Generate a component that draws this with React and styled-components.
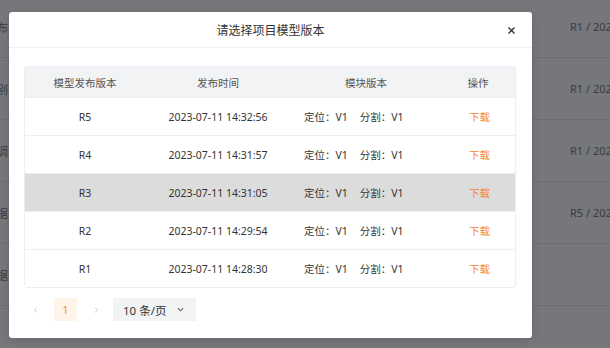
import React from 'react';
import styled, { createGlobalStyle } from 'styled-components';

const GlobalStyle = createGlobalStyle`
  html, body {
    margin: 0;
    padding: 0;
    width: 610px;
    height: 348px;
    overflow: hidden;
    background: #75777b;
    font-family: "Noto Sans", "Noto Sans CJK SC", sans-serif;
  }
`;

const Page = styled.div`
  position: relative;
  width: 610px;
  height: 348px;
  overflow: hidden;
  background: #75777b;
`;

const BgList = styled.div`
  margin-top: -4px;
  display: flex;
  flex-direction: column;
`;

const BgRow = styled.div`
  height: 61px;
  border-bottom: 1px solid #6c6e72;
  display: flex;
  align-items: center;
  font-size: 11px;
  color: #3b3c3f;
`;

const BgLeft = styled.span`
  flex: 0 0 584px;
  margin-left: -14px;
`;

const BgRight = styled.span`
  white-space: nowrap;
`;

const Modal = styled.div`
  position: absolute;
  left: 9px;
  top: 12px;
  width: 523px;
  height: 326px;
  background: #fff;
  border-radius: 3px;
  box-shadow: 0 2px 8px rgba(0, 0, 0, 0.12);
  display: flex;
  flex-direction: column;
`;

const Header = styled.div`
  height: 35px;
  border-bottom: 1px solid #f0f0f0;
  display: flex;
  align-items: center;
  justify-content: center;
  position: relative;
`;

const Title = styled.div`
  font-size: 12px;
  color: #333;
`;

const Close = styled.svg`
  position: absolute;
  right: 17px;
  top: 15px;
`;

const Body = styled.div`
  padding: 18px 16px 0 15px;
`;

const Table = styled.div`
  border: 1px solid #ebeef5;
  border-radius: 3px;
  overflow: hidden;
`;

const Row = styled.div`
  display: grid;
  grid-template-columns: 120px 146px 150px 1fr;
  align-items: center;
  height: ${(p) => (p.$head ? '30px' : '37px')};
  background: ${(p) => (p.$head ? '#f2f3f5' : p.$active ? '#dcdcdc' : '#fff')};
  border-top: ${(p) => (p.$head ? 'none' : '1px solid #ebeef5')};
  font-size: 10.5px;
  color: ${(p) => (p.$head ? '#555' : '#333')};
`;

const Cell = styled.div`
  text-align: center;
  white-space: nowrap;
`;

const VersionCell = styled(Cell)`
  text-align: left;
  padding-left: 13px;
  display: flex;
  gap: 12px;
`;

const Action = styled(Cell)`
  color: #f5873a;
  padding-left: 3px;
`;

const Pager = styled.div`
  display: flex;
  align-items: center;
  gap: 7px;
  margin-top: 10px;
  height: 23px;
`;

const Arrow = styled.div`
  width: 23px;
  height: 23px;
  display: flex;
  align-items: center;
  justify-content: center;
`;

const PageNum = styled.div`
  width: 23px;
  height: 23px;
  background: #fff4e8;
  color: #f5873a;
  font-size: 11px;
  display: flex;
  align-items: center;
  justify-content: center;
`;

const SizeSelect = styled.div`
  margin-left: -1px;
  width: 83px;
  height: 23px;
  background: #f2f3f5;
  display: flex;
  align-items: center;
  justify-content: space-between;
  padding: 0 11px 0 10px;
  box-sizing: border-box;
  font-size: 11.5px;
  color: #333;
`;

const rows = [
  { v: 'R5', t: '2023-07-11 14:32:56' },
  { v: 'R4', t: '2023-07-11 14:31:57' },
  { v: 'R3', t: '2023-07-11 14:31:05', active: true },
  { v: 'R2', t: '2023-07-11 14:29:54' },
  { v: 'R1', t: '2023-07-11 14:28:30' },
];

const bgRows = [
  ['分布', 'R1 / 2023-07-11'],
  ['识别', 'R1 / 2023-07-11'],
  ['微调', 'R1 / 2023-07-11'],
  ['数据', 'R5 / 2023-07-11'],
  ['数据', ''],
  ['', ''],
];

const Chevron = ({ dir }) => (
  <svg width="8" height="8" viewBox="0 0 8 8">
    <path
      d={dir === 'left' ? 'M5 1.5 L2.5 4 L5 6.5' : 'M3 1.5 L5.5 4 L3 6.5'}
      fill="none"
      stroke="#c8c9cc"
      strokeWidth="1"
    />
  </svg>
);

export default function App() {
  return (
    <Page>
      <GlobalStyle />
      <BgList>
        {bgRows.map((r, i) => (
          <BgRow key={i}>
            <BgLeft>{r[0]}</BgLeft>
            <BgRight>{r[1]}</BgRight>
          </BgRow>
        ))}
      </BgList>
      <Modal>
        <Header>
          <Title>请选择项目模型版本</Title>
          <Close width="7" height="7" viewBox="0 0 7 7">
            <path d="M0.5 0.5 L6.5 6.5 M6.5 0.5 L0.5 6.5" stroke="#333" strokeWidth="1.4" />
          </Close>
        </Header>
        <Body>
          <Table>
            <Row $head>
              <Cell>模型发布版本</Cell>
              <Cell>发布时间</Cell>
              <Cell>模块版本</Cell>
              <Cell>操作</Cell>
            </Row>
            {rows.map((r) => (
              <Row key={r.v} $active={r.active}>
                <Cell>{r.v}</Cell>
                <Cell>{r.t}</Cell>
                <VersionCell>
                  <span>定位：V1</span>
                  <span>分割：V1</span>
                </VersionCell>
                <Action>下载</Action>
              </Row>
            ))}
          </Table>
          <Pager>
            <Arrow>
              <Chevron dir="left" />
            </Arrow>
            <PageNum>1</PageNum>
            <Arrow>
              <Chevron dir="right" />
            </Arrow>
            <SizeSelect>
              <span>10 条/页</span>
              <svg width="9" height="9" viewBox="0 0 10 10">
                <path d="M2 3.5 L5 6.5 L8 3.5" fill="none" stroke="#666" strokeWidth="1.2" />
              </svg>
            </SizeSelect>
          </Pager>
        </Body>
      </Modal>
    </Page>
  );
}
